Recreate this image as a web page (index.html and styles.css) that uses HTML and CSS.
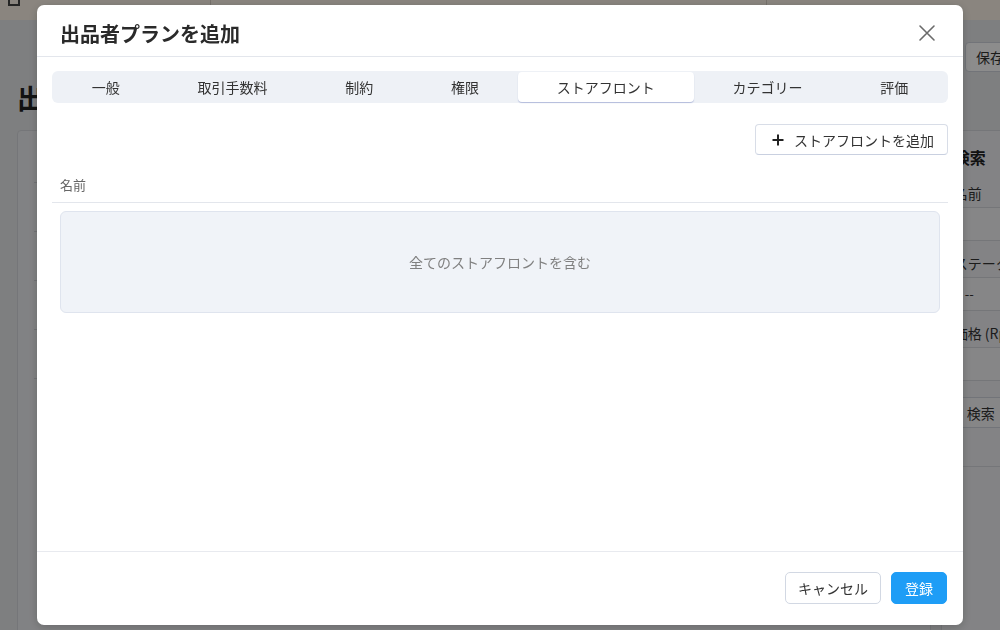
FILE: index.html
```html
<!DOCTYPE html>
<html lang="ja">
<head>
<meta charset="utf-8">
<title>出品者プランを追加</title>
<link rel="stylesheet" href="styles.css">
</head>
<body>
<div class="page">
  <header class="topbar">
    <span class="tb-icon"></span>
    <span class="tb-sep tb-sep1"></span>
    <span class="tb-sep tb-sep2"></span>
  </header>
  <div class="page-head">
    <h1 class="page-title">出品者プラン</h1>
    <button class="save-btn">保存する</button>
  </div>
  <div class="page-body">
    <div class="card main-card">
      <div class="row"></div>
      <div class="row"></div>
      <div class="row"></div>
      <div class="row"></div>
      <div class="row"></div>
    </div>
    <aside class="card search-card">
      <h2 class="search-title">検索</h2>
      <label class="s-label">名前</label>
      <div class="s-input"></div>
      <label class="s-label">ステータス</label>
      <div class="s-input s-select">--</div>
      <label class="s-label">価格 (Rp)</label>
      <div class="s-input"></div>
      <div class="s-actions"><button class="s-btn">検索</button></div>
    </aside>
  </div>
</div>

<div class="overlay">
  <div class="modal" role="dialog">
    <div class="modal-header">
      <h3 class="modal-title">出品者プランを追加</h3>
      <button class="close-btn" aria-label="閉じる">
        <svg width="18" height="18" viewBox="0 0 18 18"><path d="M2 2 L16 16 M16 2 L2 16" stroke="#6b6b6b" stroke-width="1.6" stroke-linecap="round" fill="none"/></svg>
      </button>
    </div>
    <div class="modal-body">
      <nav class="tabs">
        <div class="tab">一般</div>
        <div class="tab">取引手数料</div>
        <div class="tab">制約</div>
        <div class="tab">権限</div>
        <div class="tab active">ストアフロント</div>
        <div class="tab">カテゴリー</div>
        <div class="tab">評価</div>
      </nav>
      <div class="toolbar">
        <button class="add-btn">
          <svg width="12" height="12" viewBox="0 0 12 12"><path d="M6 0.5 V11.5 M0.5 6 H11.5" stroke="#222" stroke-width="2" fill="none"/></svg>
          <span>ストアフロントを追加</span>
        </button>
      </div>
      <div class="table-head">名前</div>
      <div class="empty-box">全てのストアフロントを含む</div>
    </div>
    <div class="modal-footer">
      <button class="btn btn-default">キャンセル</button>
      <button class="btn btn-primary">登録</button>
    </div>
  </div>
</div>
</body>
</html>
```
FILE: styles.css
```css
* { box-sizing: border-box; }
html, body {
  margin: 0;
  padding: 0;
  width: 1000px;
  height: 630px;
  overflow: hidden;
  font-family: "Noto Sans CJK JP", "Noto Sans", sans-serif;
  color: #333;
}
body { background: #e6e7ea; }
button { font-family: inherit; }

/* background page */
.page { width: 1000px; height: 630px; overflow: hidden; }
.page-head, .page-body { width: 1060px; }
.topbar {
  height: 20px;
  background: #fcf3e8;
  display: flex;
}
.tb-icon {
  width: 12px; height: 6px;
  margin-left: 8px;
  border: 2px solid #444;
  border-top: none;
}
.tb-sep { width: 1px; height: 20px; background: #d8cfc4; }
.tb-sep1 { margin-left: 190px; }
.tb-sep2 { margin-left: 555px; }

.page-head {
  height: 110px;
  display: flex;
  justify-content: space-between;
  padding: 22px 17px 0 17px;
}
.page-title {
  margin: 38px 0 0;
  font-size: 27px;
  font-weight: 700;
  color: #222;
  line-height: 36px;
  height: 36px;
}
.save-btn {
  height: 30px;
  padding: 0 10px;
  background: #fff;
  border: 1px solid #cfd4dc;
  border-radius: 4px;
  font-size: 14px;
  color: #333;
}
.page-body {
  display: flex;
  gap: 10px;
  padding: 0 0 0 17px;
}
.card {
  background: #ecedf0;
  border: 1px solid #d6d8dc;
  border-radius: 4px;
}
.main-card {
  width: 920px;
  height: 520px;
  padding-top: 51px;
}
.row {
  height: 49px;
  margin-left: 16px;
  border-top: 1px solid #cfd1d6;
}
.search-card {
  width: 120px;
  padding: 14px 12px;
  background: #eeeff2;
}
.search-title {
  margin: 0 0 14px;
  font-size: 16px;
  line-height: 24px;
  font-weight: 700;
  color: #222;
}
.s-label {
  display: block;
  font-size: 14px;
  line-height: 20px;
  color: #333;
  margin-bottom: 4px;
  white-space: nowrap;
}
.s-input {
  height: 34px;
  border: 1px solid #d6d8dc;
  background: #f4f4f6;
  margin-bottom: 12px;
  border-radius: 3px;
}
.s-select { padding: 6px 10px; font-size: 13px; line-height: 20px; }
.s-actions { padding-top: 4px; border-bottom: 1px solid #d6d8dc; padding-bottom: 38px; }
.s-btn {
  height: 31px;
  padding: 0 12px;
  background: #f4f4f6;
  border: 1px solid #cfd4dc;
  border-radius: 4px;
  font-size: 14px;
  color: #333;
}

/* overlay + modal */
.overlay {
  position: fixed;
  inset: 0;
  background: rgba(0, 0, 0, 0.45);
  display: flex;
  justify-content: center;
  align-items: flex-start;
  padding-top: 5px;
}
.modal {
  width: 926px;
  height: 620px;
  background: #fff;
  border-radius: 7px;
  box-shadow: 0 2px 10px rgba(0,0,0,0.2);
  display: flex;
  flex-direction: column;
}
.modal-header {
  height: 52px;
  flex: none;
  display: flex;
  align-items: center;
  justify-content: space-between;
  padding: 5px 24px 0 23px;
  border-bottom: 1px solid #e3e6ec;
}
.modal-title {
  margin: 0;
  font-size: 20px;
  font-weight: 700;
  color: #2a2a2a;
}
.close-btn {
  width: 24px; height: 24px;
  padding: 0;
  border: none;
  background: none;
  display: flex;
  align-items: center;
  justify-content: center;
}
.modal-body {
  flex: 1;
  padding: 14px 15px 0;
}
.tabs {
  display: flex;
  height: 32px;
  padding: 1px;
  background: #eef1f6;
  border-radius: 6px;
}
.tab {
  flex: 1 1 auto;
  display: flex;
  align-items: center;
  justify-content: center;
  font-size: 14px;
  color: #333;
  white-space: nowrap;
  border-radius: 4px;
}
.tab.active {
  background: #fff;
  box-shadow: 0 1px 1px rgba(70, 90, 170, 0.35);
}
.toolbar {
  display: flex;
  justify-content: flex-end;
  margin-top: 21px;
}
.add-btn {
  height: 31px;
  display: flex;
  align-items: center;
  gap: 10px;
  padding: 0 13px 0 16px;
  background: #fff;
  border: 1px solid #d8dde7;
  border-bottom-color: #c9d0e0;
  border-radius: 4px;
  font-size: 14px;
  color: #333;
}
.table-head {
  margin-top: 13px;
  height: 35px;
  padding: 7px 8px 0;
  font-size: 13px;
  color: #666;
  border-bottom: 1px solid #e3e6ec;
}
.empty-box {
  margin: 8px 8px 0;
  height: 102px;
  background: #f0f3f8;
  border: 1px solid #dfe4ee;
  border-radius: 6px;
  display: flex;
  align-items: center;
  justify-content: center;
  font-size: 14px;
  color: #808080;
}
.modal-footer {
  flex: none;
  height: 74px;
  border-top: 1px solid #e8eaef;
  display: flex;
  justify-content: flex-end;
  align-items: flex-start;
  gap: 10px;
  padding: 20px 16px 0;
}
.btn {
  height: 32px;
  padding: 0 12px;
  border-radius: 5px;
  font-size: 14px;
}
.btn-default {
  background: #fff;
  border: 1px solid #d2d8e3;
  color: #333;
}
.btn-primary {
  background: #1e9df6;
  border: 1px solid #1e9df6;
  color: #fff;
  padding: 0 13px;
}
```
